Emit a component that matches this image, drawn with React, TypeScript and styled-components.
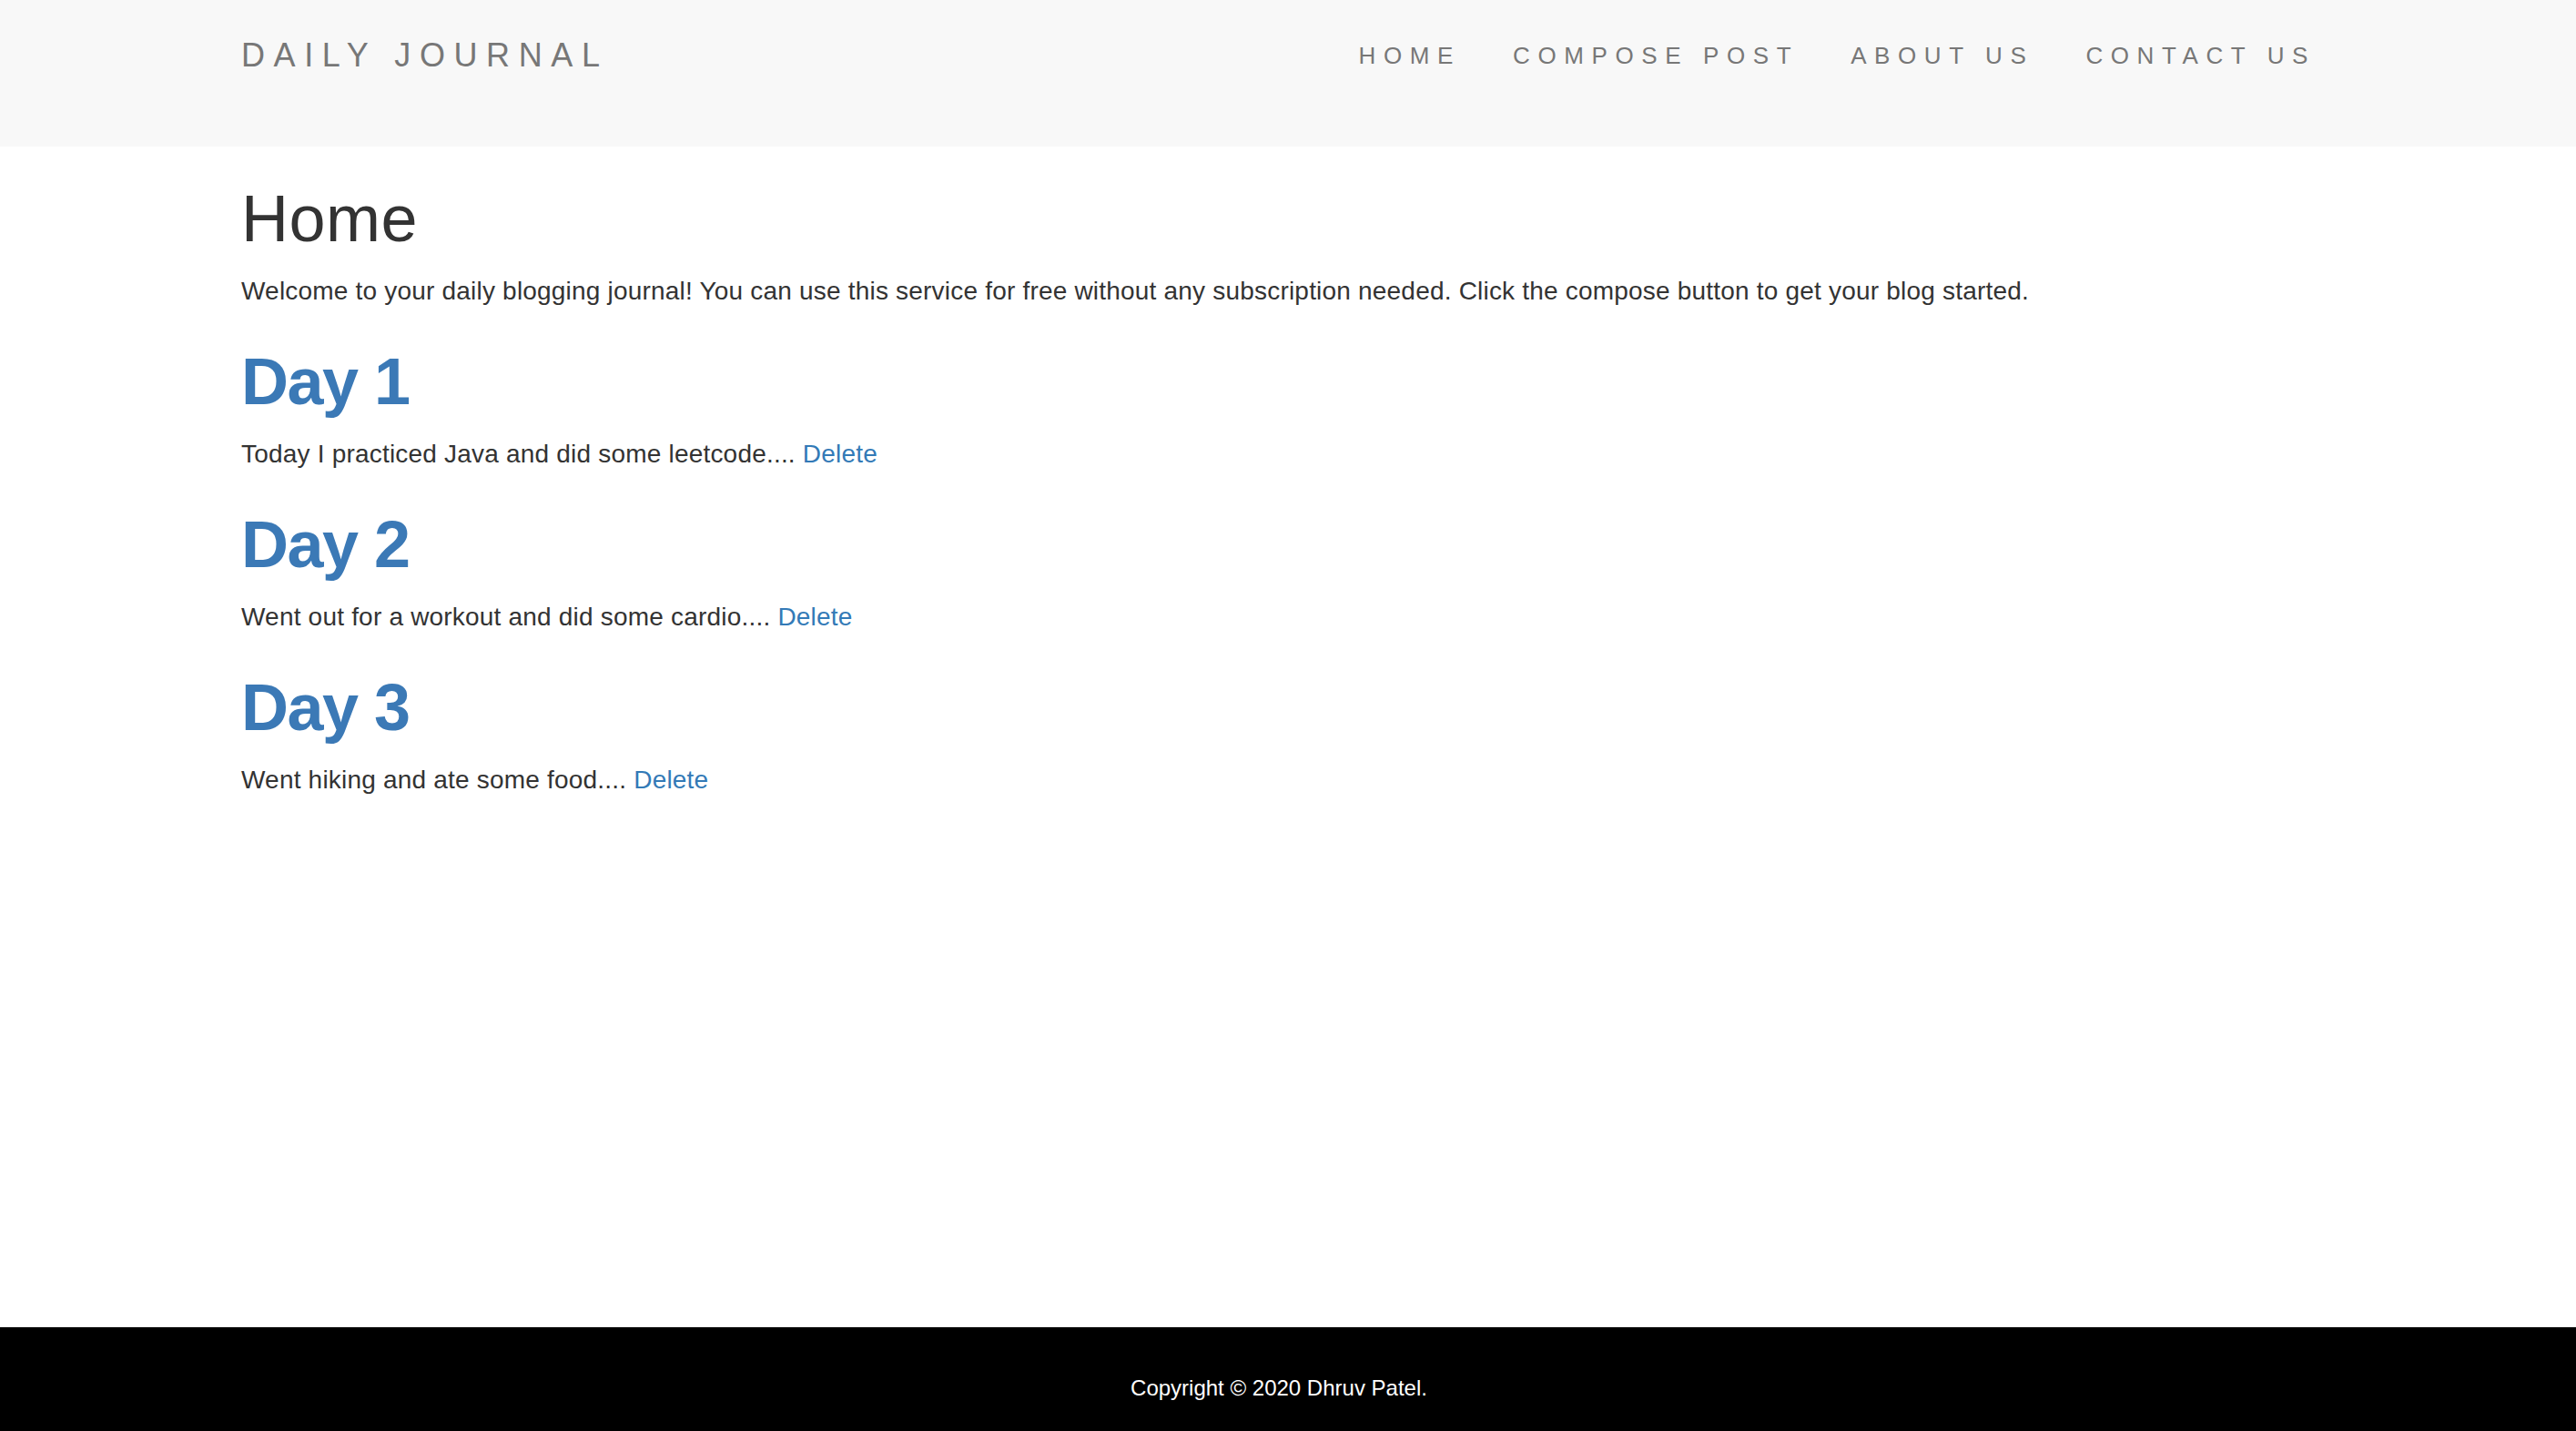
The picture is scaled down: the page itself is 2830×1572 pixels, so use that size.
import React from "react";
import styled, { createGlobalStyle } from "styled-components";

const GlobalStyle = createGlobalStyle`
  * { box-sizing: border-box; }
  html, body { margin: 0; padding: 0; }
  body {
    font-family: "Liberation Sans", Arial, Helvetica, sans-serif;
    color: #333;
    background: #fff;
  }
`;

const Page = styled.div`
  min-height: 100vh;
  display: flex;
  flex-direction: column;
`;

const Container = styled.div`
  width: 2343px;
  padding: 0 30px;
  margin-left: 235px;
`;

const Header = styled.header`
  background: #f8f8f8;
  padding-bottom: 39px;
`;

const NavRow = styled(Container)`
  height: 122px;
  display: flex;
  align-items: center;
  justify-content: space-between;
`;

const Brand = styled.a`
  font-size: 36px;
  letter-spacing: 9.6px;
  color: #777;
  text-decoration: none;
  text-transform: uppercase;
`;

const NavList = styled.ul`
  display: flex;
  gap: 57px;
  list-style: none;
  margin: 0 4px 0 0;
  padding: 0;
`;

const NavLink = styled.a`
  font-size: 26px;
  letter-spacing: 8.6px;
  color: #777;
  text-decoration: none;
  text-transform: uppercase;
`;

const Main = styled(Container)`
  flex: 1;
`;

const Heading = styled.h1<{ $post?: boolean }>`
  margin: 40px 0 20px;
  font-size: 72px;
  line-height: 79px;
  font-weight: ${(p) => (p.$post ? 700 : 500)};
  letter-spacing: ${(p) => (p.$post ? "-1.5px" : "0.5px")};
  color: ${(p) => (p.$post ? "#3b79b6" : "#333")};
`;

const Text = styled.p`
  margin: 0 0 20px;
  font-size: 28px;
  line-height: 40px;
  letter-spacing: 0.2px;
  color: #333;
`;

const DeleteLink = styled.a`
  color: #337ab7;
  text-decoration: none;
`;

const Footer = styled.footer`
  height: 114px;
  padding: 47px 20px 0 0;
  background: #000;
  color: #fff;
  text-align: center;
  font-size: 24px;
  line-height: 40px;
`;

const posts = [
  { title: "Day 1", body: "Today I practiced Java and did some leetcode...." },
  { title: "Day 2", body: "Went out for a workout and did some cardio...." },
  { title: "Day 3", body: "Went hiking and ate some food...." },
];

const navItems = ["Home", "Compose Post", "About Us", "Contact Us"];

export default function App() {
  return (
    <Page>
      <GlobalStyle />
      <Header>
        <NavRow>
          <Brand href="#">Daily Journal</Brand>
          <NavList>
            {navItems.map((item) => (
              <li key={item}>
                <NavLink href="#">{item}</NavLink>
              </li>
            ))}
          </NavList>
        </NavRow>
      </Header>
      <Main>
        <Heading>Home</Heading>
        <Text>
          Welcome to your daily blogging journal! You can use this service for free without any
          subscription needed. Click the compose button to get your blog started.
        </Text>
        {posts.map((post) => (
          <React.Fragment key={post.title}>
            <Heading $post>{post.title}</Heading>
            <Text>
              {post.body} <DeleteLink href="#">Delete</DeleteLink>
            </Text>
          </React.Fragment>
        ))}
      </Main>
      <Footer>Copyright © 2020 Dhruv Patel.</Footer>
    </Page>
  );
}
